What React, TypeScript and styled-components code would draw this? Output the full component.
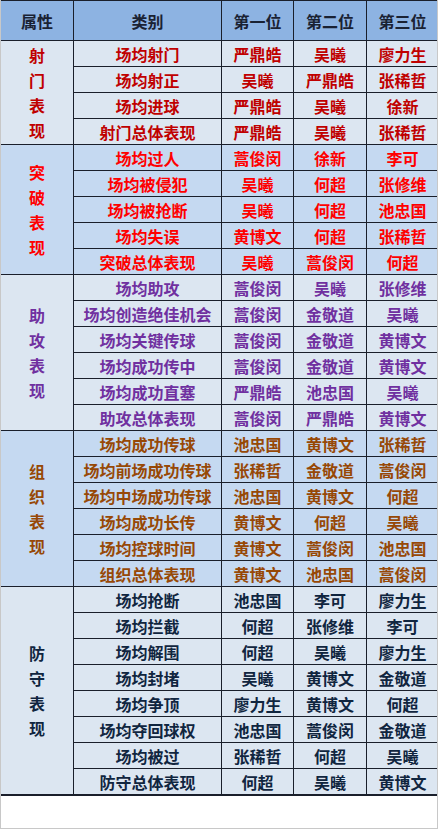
import styled, { createGlobalStyle } from 'styled-components';

const GlobalStyle = createGlobalStyle`
  html, body {
    margin: 0;
    padding: 0;
    background: #ffffff;
  }
  body {
    font-family: "Noto Sans CJK SC", "Noto Sans", sans-serif;
  }
`;

interface Group {
  name: string;
  color: string;
  bg: string;
  rows: [string, string, string, string][];
}

const groups: Group[] = [
  {
    name: '射门表现',
    color: '#c00000',
    bg: '#dce6f1',
    rows: [
      ['场均射门', '严鼎皓', '吴曦', '廖力生'],
      ['场均射正', '吴曦', '严鼎皓', '张稀哲'],
      ['场均进球', '严鼎皓', '吴曦', '徐新'],
      ['射门总体表现', '严鼎皓', '吴曦', '张稀哲'],
    ],
  },
  {
    name: '突破表现',
    color: '#ff0000',
    bg: '#c5d9f1',
    rows: [
      ['场均过人', '蒿俊闵', '徐新', '李可'],
      ['场均被侵犯', '吴曦', '何超', '张修维'],
      ['场均被抢断', '吴曦', '何超', '池忠国'],
      ['场均失误', '黄博文', '何超', '张稀哲'],
      ['突破总体表现', '吴曦', '蒿俊闵', '何超'],
    ],
  },
  {
    name: '助攻表现',
    color: '#7030a0',
    bg: '#dce6f1',
    rows: [
      ['场均助攻', '蒿俊闵', '吴曦', '张修维'],
      ['场均创造绝佳机会', '蒿俊闵', '金敬道', '吴曦'],
      ['场均关键传球', '蒿俊闵', '金敬道', '黄博文'],
      ['场均成功传中', '蒿俊闵', '金敬道', '黄博文'],
      ['场均成功直塞', '严鼎皓', '池忠国', '吴曦'],
      ['助攻总体表现', '蒿俊闵', '严鼎皓', '黄博文'],
    ],
  },
  {
    name: '组织表现',
    color: '#974806',
    bg: '#c5d9f1',
    rows: [
      ['场均成功传球', '池忠国', '黄博文', '张稀哲'],
      ['场均前场成功传球', '张稀哲', '金敬道', '蒿俊闵'],
      ['场均中场成功传球', '池忠国', '黄博文', '何超'],
      ['场均成功长传', '黄博文', '何超', '吴曦'],
      ['场均控球时间', '黄博文', '蒿俊闵', '池忠国'],
      ['组织总体表现', '黄博文', '池忠国', '蒿俊闵'],
    ],
  },
  {
    name: '防守表现',
    color: '#10253f',
    bg: '#dce6f1',
    rows: [
      ['场均抢断', '池忠国', '李可', '廖力生'],
      ['场均拦截', '何超', '张修维', '李可'],
      ['场均解围', '何超', '吴曦', '廖力生'],
      ['场均封堵', '吴曦', '黄博文', '金敬道'],
      ['场均争顶', '廖力生', '黄博文', '何超'],
      ['场均夺回球权', '池忠国', '蒿俊闵', '金敬道'],
      ['场均被过', '张稀哲', '何超', '吴曦'],
      ['防守总体表现', '何超', '吴曦', '黄博文'],
    ],
  },
];

const Frame = styled.div`
  width: 438px;
  height: 829px;
  box-sizing: border-box;
  border-left: 1px solid #c8c8c8;
  border-right: 1px solid #c8c8c8;
  border-bottom: 1px solid #c8c8c8;
  overflow: hidden;
`;

const Table = styled.table`
  width: 438px;
  border-collapse: collapse;
  table-layout: fixed;
  margin-left: -1px;
  border-bottom: 2px solid #1a1f2b;
`;

const HeadCell = styled.th`
  height: 39px;
  padding: 0;
  background: #8db3e2;
  border: 1px solid #1a1f2b;
  color: #1a2233;
  font-size: 16px;
  font-weight: 700;
  line-height: 20px;
  text-align: center;
  vertical-align: middle;
`;

const Row = styled.tr`
  height: 26px;
`;

const Cell = styled.td<{ $color: string; $bg: string }>`
  padding: 0;
  height: 25px;
  background: ${p => p.$bg};
  border: 1px solid #1a1f2b;
  color: ${p => p.$color};
  font-size: 16px;
  font-weight: 700;
  line-height: 20px;
  text-align: center;
  vertical-align: middle;
  white-space: nowrap;
`;

const StackedLabel = styled.div`
  display: flex;
  flex-direction: column;
  align-items: center;
  line-height: 25px;
`;

export default function App() {
  return (
    <>
      <GlobalStyle />
      <Frame>
        <Table>
          <colgroup>
            <col style={{ width: 73 }} />
            <col style={{ width: 148 }} />
            <col style={{ width: 72 }} />
            <col style={{ width: 73 }} />
            <col style={{ width: 72 }} />
          </colgroup>
          <thead>
            <tr>
              <HeadCell>属性</HeadCell>
              <HeadCell>类别</HeadCell>
              <HeadCell>第一位</HeadCell>
              <HeadCell>第二位</HeadCell>
              <HeadCell>第三位</HeadCell>
            </tr>
          </thead>
          <tbody>
            {groups.map(g =>
              g.rows.map((r, i) => (
                <Row key={g.name + r[0]}>
                  {i === 0 && (
                    <Cell $color={g.color} $bg={g.bg} rowSpan={g.rows.length}>
                      <StackedLabel>
                        {g.name.split('').map((ch, k) => (
                          <span key={k}>{ch}</span>
                        ))}
                      </StackedLabel>
                    </Cell>
                  )}
                  {r.map((v, k) => (
                    <Cell key={k} $color={g.color} $bg={g.bg}>
                      {v}
                    </Cell>
                  ))}
                </Row>
              ))
            )}
          </tbody>
        </Table>
      </Frame>
    </>
  );
}
